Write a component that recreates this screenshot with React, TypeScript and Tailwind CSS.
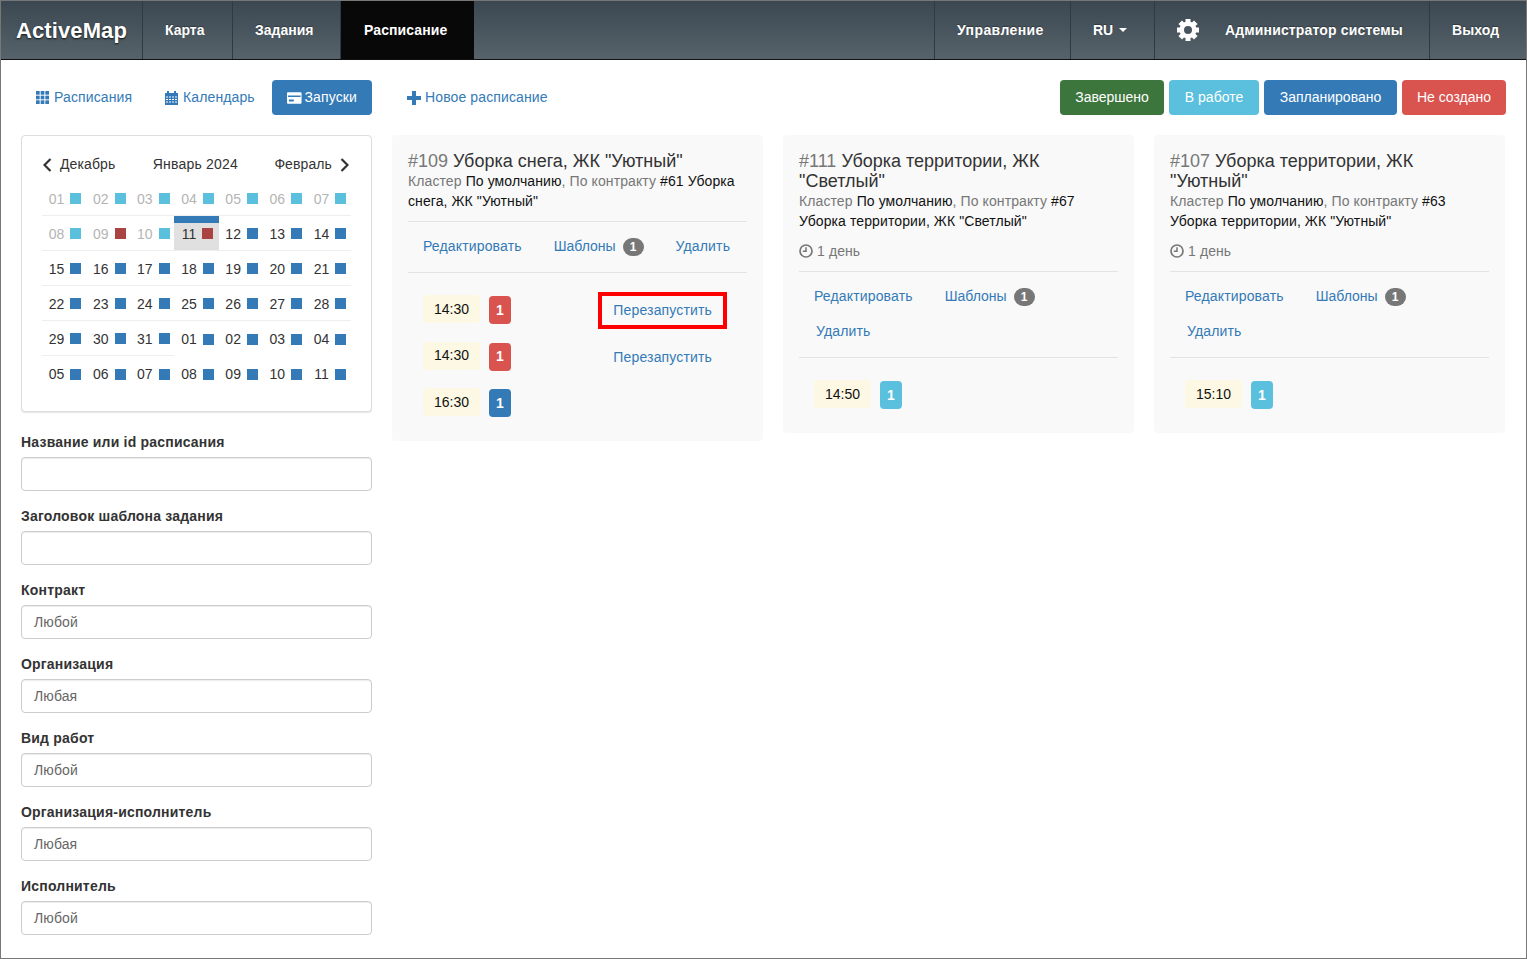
import type { ReactNode } from "react";

type Status = "light" | "blue" | "red";

const squareColor: Record<Status, string> = {
  light: "bg-[#5bc0de]",
  blue: "bg-[#337ab7]",
  red: "bg-[#a94442]",
};

type Day = { label: string; muted?: boolean; status: Status; noLine?: boolean; today?: boolean };

const days: Day[] = [
  ...["01", "02", "03", "04", "05", "06", "07", "08"].map((label) => ({ label, muted: true, status: "light" as Status })),
  { label: "09", muted: true, status: "red" },
  { label: "10", muted: true, status: "light" },
  { label: "11", status: "red", today: true },
  ...["12", "13", "14", "15", "16", "17", "18", "19", "20", "21", "22", "23", "24", "25", "26", "27", "28", "29", "30", "31"].map((label) => ({
    label,
    status: "blue" as Status,
  })),
  ...["01", "02", "03", "04"].map((label) => ({ label, status: "blue" as Status, noLine: true })),
  ...["05", "06", "07", "08", "09", "10", "11"].map((label) => ({ label, status: "blue" as Status, noLine: true })),
];

const NavItem = ({ children, active, className = "" }: { children: ReactNode; active?: boolean; className?: string }) => (
  <a
    className={`flex h-full items-center text-[14px] font-bold text-white [text-shadow:0_-1px_1px_rgba(0,0,0,0.35)] ${
      active ? "bg-[#080808] pl-[23px]" : "border-r border-[#2f3b43] pl-[22px]"
    } ${className}`}
  >
    {children}
  </a>
);

/* icons */
const GridIcon = () => (
  <svg width="13" height="13" viewBox="0 0 13 13" className="fill-current">
    {[0, 4.67, 9.33].map((y) =>
      [0, 4.67, 9.33].map((x) => <rect key={`${x}-${y}`} x={x} y={y} width="3.67" height="3.67" />),
    )}
  </svg>
);

const CalendarIcon = () => (
  <svg width="13" height="14" viewBox="0 0 13 14" className="fill-current">
    <path
      fillRule="evenodd"
      d="M2 0h2v2h5V0h2v2h2v12H0V2h2zM1 5.500v1h2v-1zM4 5.500v1h2v-1zM7 5.500v1h2v-1zM10 5.500v1h2v-1zM1 8v1h2V8zM4 8v1h2V8zM7 8v1h2V8zM10 8v1h2V8zM1 10.500v1h2v-1zM4 10.500v1h2v-1zM7 10.500v1h2v-1zM10 10.500v1h2v-1z"
    />
  </svg>
);

const CardIcon = () => (
  <svg width="15" height="12" viewBox="0 0 15 12" className="fill-current">
    <path fillRule="evenodd" d="M1 0h13a1 1 0 0 1 1 1v10a1 1 0 0 1-1 1H1a1 1 0 0 1-1-1V1a1 1 0 0 1 1-1zM1 3.500v1.500h13V3.500zM2 7.500V9.500h5V7.500z" />
  </svg>
);

const PlusIcon = () => (
  <svg width="14" height="14" viewBox="0 0 14 14" className="fill-current">
    <path d="M5 0h4v5h5v4H9v5H5V9H0V5h5z" />
  </svg>
);

const ClockIcon = () => (
  <svg width="14" height="14" viewBox="0 0 14 14" fill="none" className="stroke-current">
    <circle cx="7" cy="7" r="6" strokeWidth="1.700" />
    <path d="M7 3.200V7.300H3.800" strokeWidth="1.500" />
  </svg>
);

const Chevron = ({ right }: { right?: boolean }) => (
  <svg width="9" height="14" viewBox="0 0 9 14" fill="none" className="stroke-current">
    <path d={right ? "M1.500 1l6 6-6 6" : "M7.500 1l-6 6 6 6"} strokeWidth="2.200" />
  </svg>
);

const GearIcon = () => (
  <svg width="22" height="22" viewBox="-11 -11 22 22" className="fill-white stroke-white">
    <circle r="6.250" fill="none" strokeWidth="4.500" />
    {[0, 45, 90, 135, 180, 225, 270, 315].map((a) => (
      <rect key={a} x="-2.500" y="-11" width="5" height="4" stroke="none" transform={`rotate(${a})`} />
    ))}
  </svg>
);

const Pill = ({ children, active, className = "" }: { children: ReactNode; active?: boolean; className?: string }) => (
  <a
    className={`flex h-[35px] items-center rounded px-[15px] text-[14px] tracking-[0.12px] ${active ? "bg-[#337ab7] text-white" : "text-[#337ab7]"} ${className}`}
  >
    {children}
  </a>
);

const StatusButton = ({ label, className }: { label: string; className: string }) => (
  <button className={`flex h-[35px] items-center justify-center rounded text-[14px] text-white ${className}`}>{label}</button>
);

const Calendar = () => (
  <div className="rounded border border-[#ddd] bg-white p-5 shadow-[0_1px_1px_rgba(0,0,0,0.1)]">
    <div className="-mt-[4px] mb-[4px] flex h-[25px] items-center justify-between text-[14px] leading-[17px] text-[#333]">
      <span className="flex items-center gap-[8px] pl-[1px] tracking-[0.1px]">
        <Chevron /> Декабрь
      </span>
      <span className="pl-[1px] tracking-[0.2px]">Январь 2024</span>
      <span className="flex items-center gap-[8px] pr-[2px] tracking-[0.1px]">
        Февраль <Chevron right />
      </span>
    </div>
    <div className="grid grid-cols-7">
      {days.map((d, i) => (
        <div key={i} className={`relative h-[35px] ${d.noLine ? "" : "border-b border-[#eee]"} ${d.today ? "bg-[#e0e0e0]" : ""}`}>
          {d.today && <div className="absolute inset-x-0 top-0 h-[7px] bg-[#337ab7]" />}
          <div className="flex h-full items-center justify-center gap-[6px] pt-[2px] pl-[2px]">
            <span className={`text-[14px] ${d.muted ? "text-[#b4b4b4]" : "text-[#333]"}`}>{d.label}</span>
            <span className={`mb-[1px] h-[11px] w-[11px] ${squareColor[d.status]}`} />
          </div>
        </div>
      ))}
    </div>
  </div>
);

const Field = ({ label, value }: { label: string; value?: string }) => (
  <div className="mb-[15px]">
    <div className="mb-[5px] text-[14px] leading-[20px] font-bold tracking-[0.2px] text-[#333]">{label}</div>
    <div className="flex h-[34px] items-center rounded border border-[#ccc] bg-white px-3 text-[14px] tracking-[0.1px] text-[#666] shadow-[inset_0_1px_1px_rgba(0,0,0,0.075)]">
      {value}
    </div>
  </div>
);

const Badge = () => (
  <span className="flex h-[18px] w-[21px] items-center justify-center rounded-full bg-[#777] text-[12px] font-bold text-white">1</span>
);

type Run = { time: string; color: string; restart?: boolean; marked?: boolean };

type Schedule = {
  id: string;
  title: string;
  cluster: string;
  contract: string;
  contractName: string;
  duration?: string;
  runs: Run[];
};

const schedules: Schedule[] = [
  {
    id: "#109",
    title: 'Уборка снега, ЖК "Уютный"',
    cluster: "По умолчанию",
    contract: "#61",
    contractName: 'Уборка снега, ЖК "Уютный"',
    runs: [
      { time: "14:30", color: "bg-[#d9534f]", restart: true, marked: true },
      { time: "14:30", color: "bg-[#d9534f]", restart: true },
      { time: "16:30", color: "bg-[#337ab7]" },
    ],
  },
  {
    id: "#111",
    title: 'Уборка территории, ЖК "Светлый"',
    cluster: "По умолчанию",
    contract: "#67",
    contractName: 'Уборка территории, ЖК "Светлый"',
    duration: "1 день",
    runs: [{ time: "14:50", color: "bg-[#5bc0de]" }],
  },
  {
    id: "#107",
    title: 'Уборка территории, ЖК "Уютный"',
    cluster: "По умолчанию",
    contract: "#63",
    contractName: 'Уборка территории, ЖК "Уютный"',
    duration: "1 день",
    runs: [{ time: "15:10", color: "bg-[#5bc0de]" }],
  },
];

const ScheduleCard = ({ item }: { item: Schedule }) => (
  <div className="w-[351px] rounded bg-[#f9f9f9] px-4 pt-4 pb-[25px] first:w-[371px]">
    <div className="text-[18px] leading-[20px] text-[#333]">
      <span className="text-[#777]">{item.id}</span> {item.title}
    </div>
    <div className="text-[14px] leading-[20px] tracking-[0.1px] text-[#111]">
      <span className="text-[#777]">Кластер</span> {item.cluster}
      <span className="text-[#777]">, По контракту</span> {item.contract} {item.contractName}
    </div>
    {item.duration && (
      <div className="mt-[10px] flex h-[20px] items-center gap-[4px] text-[14px] tracking-[0.1px] text-[#777]">
        <ClockIcon /> {item.duration}
      </div>
    )}
    <div className="mt-[10px] border-y border-[#e3e3e3] pt-[7px] pb-[8px]">
      <div className="flex flex-wrap text-[14px] text-[#337ab7]">
        <a className="flex h-[35px] items-center px-[15px] tracking-[0.15px]">Редактировать</a>
        <a className="ml-[2px] flex h-[35px] items-center gap-[7px] px-[15px]">
          Шаблоны <Badge />
        </a>
        <a className="ml-[2px] flex h-[35px] items-center px-[15px] tracking-[0.15px]">Удалить</a>
      </div>
    </div>
    <div className="mt-[22px] flex flex-col gap-[18.500px] pl-[15px]">
      {item.runs.map((run, i) => (
        <div key={i} className="flex h-[28px] items-center">
          <span className="flex h-[28px] w-[57px] items-center justify-center rounded bg-[#fcf8e3] text-[14px] text-[#111]">
            {run.time}
          </span>
          <span className={`mt-[2px] ml-[9px] flex h-[28px] w-[22px] items-center justify-center rounded text-[14px] font-bold text-white ${run.color}`}>
            1
          </span>
          {run.restart && (
            <a className={`relative mr-[20px] ml-auto px-[15px] text-[14px] tracking-[0.15px] text-[#337ab7] ${run.marked ? "mt-[2px]" : "mt-[4px]"}`}>
              Перезапустить
              {run.marked && <span className="absolute inset-x-0 -inset-y-[8px] border-4 border-[#ff0000]" />}
            </a>
          )}
        </div>
      ))}
    </div>
  </div>
);

export default function App() {
  return (
    <div className="h-[959px] overflow-hidden border border-[#777] bg-white font-['Liberation_Sans',Arial,sans-serif]">
      <nav className="flex h-[59px] items-stretch border-b border-[#111] bg-gradient-to-b from-[#3c4851] to-[#56636b]">
        <a className="flex w-[142px] items-center border-r border-[#2f3b43] pl-[15px] text-[22px] font-bold tracking-[0.1px] text-white [text-shadow:0_1px_2px_rgba(0,0,0,0.8)]">
          ActiveMap
        </a>
        <NavItem className="w-[90px]">Карта</NavItem>
        <NavItem className="w-[108px]">Задания</NavItem>
        <NavItem active className="w-[133px] tracking-[0.1px]">
          Расписание
        </NavItem>
        <div className="flex-1 border-r border-[#2f3b43]" />
        <NavItem className="w-[136px] tracking-[0.4px]">Управление</NavItem>
        <NavItem className="w-[84px]">
          RU
          <span className="ml-[6px] h-0 w-0 border-x-4 border-t-4 border-x-transparent border-t-white" />
        </NavItem>
        <NavItem className="w-[275px] tracking-[0.15px]">
          <span className="mr-[26px]">
            <GearIcon />
          </span>
          Администратор системы
        </NavItem>
        <a className="flex w-[96px] items-center pl-[22px] text-[14px] font-bold tracking-[0.1px] text-white [text-shadow:0_-1px_1px_rgba(0,0,0,0.35)]">Выход</a>
      </nav>

      <div className="flex gap-5 px-5 pt-5">
        <aside className="w-[351px] shrink-0">
          <div className="mb-5 flex h-[35px] gap-[2px]">
            <Pill className="w-[127px] gap-[5px]">
              <GridIcon /> Расписания
            </Pill>
            <Pill className="w-[120px] gap-[5px]">
              <CalendarIcon /> Календарь
            </Pill>
            <Pill active className="w-[100px] gap-[3px]">
              <CardIcon /> Запуски
            </Pill>
          </div>
          <Calendar />
          <div className="mt-5">
            <Field label="Название или id расписания" />
            <Field label="Заголовок шаблона задания" />
            <Field label="Контракт" value="Любой" />
            <Field label="Организация" value="Любая" />
            <Field label="Вид работ" value="Любой" />
            <Field label="Организация-исполнитель" value="Любая" />
            <Field label="Исполнитель" value="Любой" />
          </div>
        </aside>

        <main className="min-w-0 flex-1">
          <div className="mb-5 flex h-[35px] items-center justify-between">
            <Pill className="gap-[4px]">
              <PlusIcon /> Новое расписание
            </Pill>
            <div className="flex gap-[5px]">
              <StatusButton label="Завершено" className="w-[104px] bg-[#3c763d]" />
              <StatusButton label="В работе" className="w-[90px] bg-[#5bc0de]" />
              <StatusButton label="Запланировано" className="w-[133px] bg-[#337ab7]" />
              <StatusButton label="Не создано" className="w-[104px] bg-[#d9534f]" />
            </div>
          </div>
          <div className="flex items-start gap-5">
            {schedules.map((s) => (
              <ScheduleCard key={s.id} item={s} />
            ))}
          </div>
        </main>
      </div>
    </div>
  );
}
